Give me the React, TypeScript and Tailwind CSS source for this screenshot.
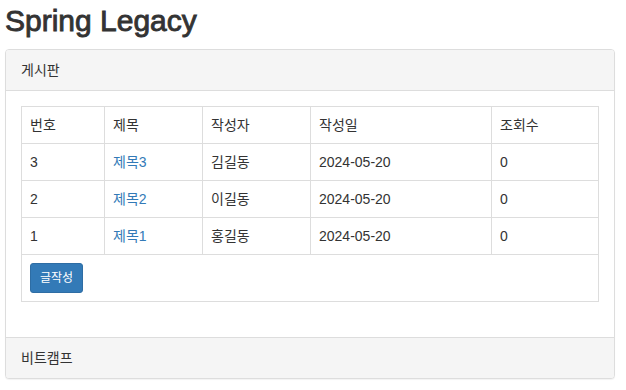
import React from "react";

const rows = [
  { no: 3, title: "제목3", writer: "김길동", date: "2024-05-20", hit: 0 },
  { no: 2, title: "제목2", writer: "이길동", date: "2024-05-20", hit: 0 },
  { no: 1, title: "제목1", writer: "홍길동", date: "2024-05-20", hit: 0 },
];

export default function App() {
  return (
    <div
      className="min-h-[390px] bg-white text-[14px] leading-[20px] text-[#333333]"
      style={{ fontFamily: '"Liberation Sans", "Noto Sans CJK KR", sans-serif' }}
    >
      <div className="px-[5px] pt-[4px]">
        <h2 className="mb-[12px] text-[30px] font-normal leading-[33px] text-[#333333] [-webkit-text-stroke:0.9px_#333333]">
          Spring Legacy
        </h2>
        <div className="w-[610px] overflow-hidden rounded-[4px] border border-[#dddddd] bg-white shadow-[0_1px_1px_rgba(0,0,0,0.05)]">
          <div className="border-b border-[#dddddd] bg-[#f5f5f5] px-[15px] py-[10px]">게시판</div>
          <div className="p-[15px]">
            <table className="mb-[20px] w-full border-collapse border border-[#dddddd]">
              <tbody>
                <tr>
                  <td className="w-[83px] border border-[#dddddd] p-[8px]">번호</td>
                  <td className="w-[98px] border border-[#dddddd] p-[8px]">제목</td>
                  <td className="w-[108px] border border-[#dddddd] p-[8px]">작성자</td>
                  <td className="w-[181px] border border-[#dddddd] p-[8px]">작성일</td>
                  <td className="border border-[#dddddd] p-[8px]">조회수</td>
                </tr>
                {rows.map((r) => (
                  <tr key={r.no}>
                    <td className="border border-[#dddddd] p-[8px]">{r.no}</td>
                    <td className="border border-[#dddddd] p-[8px]">
                      <a href="#" className="text-[#337ab7]">
                        {r.title}
                      </a>
                    </td>
                    <td className="border border-[#dddddd] p-[8px]">{r.writer}</td>
                    <td className="border border-[#dddddd] p-[8px]">{r.date}</td>
                    <td className="border border-[#dddddd] p-[8px]">{r.hit}</td>
                  </tr>
                ))}
                <tr>
                  <td colSpan={5} className="border border-[#dddddd] p-[8px]">
                    <button className="flex h-[30px] w-[53px] items-center justify-center rounded-[3px] border border-[#2e6da4] bg-[#337ab7] text-[12px] leading-[18px] text-white">
                      글작성
                    </button>
                  </td>
                </tr>
              </tbody>
            </table>
          </div>
          <div className="border-t border-[#dddddd] bg-[#f5f5f5] px-[15px] py-[10px]">비트캠프</div>
        </div>
      </div>
    </div>
  );
}
